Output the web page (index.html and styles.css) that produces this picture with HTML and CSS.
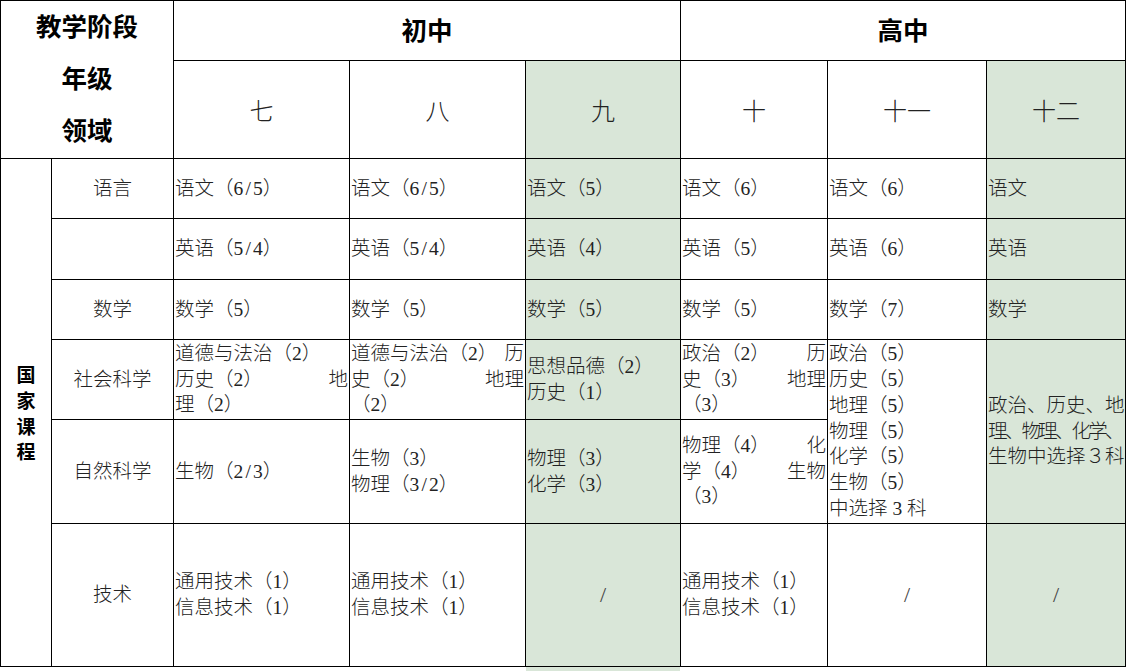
FILE: index.html
```html
<!DOCTYPE html>
<html lang="zh-CN">
<head>
<meta charset="utf-8">
<title>课程设置</title>
<link rel="stylesheet" href="styles.css">
</head>
<body>
<div class="sheet">
  <div class="c ctr hd stage span2c span2r"><div>教学阶段</div><div>年级</div><div>领域</div></div>
  <div class="c ctr hd band span3c">初中</div>
  <div class="c ctr hd band span3c">高中</div>

  <div class="c ctr grade">七</div>
  <div class="c ctr grade">八</div>
  <div class="c ctr grade g">九</div>
  <div class="c ctr grade">十</div>
  <div class="c ctr grade">十一</div>
  <div class="c ctr grade g">十二</div>

  <div class="c ctr nat span6r"><div>国</div><div>家</div><div>课</div><div>程</div></div>
  <div class="c ctr">语言</div>
  <div class="c"><div>语文（6<span class="sl">/</span>5）</div></div>
  <div class="c"><div>语文（6<span class="sl">/</span>5）</div></div>
  <div class="c g">语文（5）</div>
  <div class="c">语文（6）</div>
  <div class="c">语文（6）</div>
  <div class="c g">语文</div>

  <div class="c ctr"></div>
  <div class="c"><div>英语（5<span class="sl">/</span>4）</div></div>
  <div class="c"><div>英语（5<span class="sl">/</span>4）</div></div>
  <div class="c g">英语（4）</div>
  <div class="c">英语（5）</div>
  <div class="c">英语（6）</div>
  <div class="c g">英语</div>

  <div class="c ctr">数学</div>
  <div class="c">数学（5）</div>
  <div class="c">数学（5）</div>
  <div class="c g">数学（5）</div>
  <div class="c">数学（5）</div>
  <div class="c">数学（7）</div>
  <div class="c g">数学</div>

  <div class="c ctr">社会科学</div>
  <div class="c">
    <div>道德与法治（2）</div>
    <div class="j"><span>历史（2）</span><span>地</span></div>
    <div>理（2）</div>
  </div>
  <div class="c">
    <div class="j"><span>道德与法治（2）</span><span>历</span></div>
    <div class="j"><span>史（2）</span><span>地理</span></div>
    <div>（2）</div>
  </div>
  <div class="c g"><div>思想品德（2）</div><div>历史（1）</div></div>
  <div class="c">
    <div class="j"><span>政治（2）</span><span>历</span></div>
    <div class="j"><span>史（3）</span><span>地理</span></div>
    <div>（3）</div>
  </div>
  <div class="c span2r">
    <div>政治（5）</div><div>历史（5）</div><div>地理（5）</div><div>物理（5）</div><div>化学（5）</div><div>生物（5）</div><div>中选择 3 科</div>
  </div>
  <div class="c g span2r">
    <div>政治、历史、地</div><div class="tight">理、物理、化学、</div><div>生物中选择３科</div>
  </div>

  <div class="c ctr">自然科学</div>
  <div class="c"><div>生物（2<span class="sl">/</span>3）</div></div>
  <div class="c"><div>生物（3）</div><div>物理（3<span class="sl">/</span>2）</div></div>
  <div class="c g"><div>物理（3）</div><div>化学（3）</div></div>
  <div class="c">
    <div class="j"><span>物理（4）</span><span>化</span></div>
    <div class="j"><span>学（4）</span><span>生物</span></div>
    <div>（3）</div>
  </div>

  <div class="c ctr">技术</div>
  <div class="c"><div>通用技术（1）</div><div>信息技术（1）</div></div>
  <div class="c"><div>通用技术（1）</div><div>信息技术（1）</div></div>
  <div class="c ctr g slash">/</div>
  <div class="c"><div>通用技术（1）</div><div>信息技术（1）</div></div>
  <div class="c ctr slash">/</div>
  <div class="c ctr g slash">/</div>
</div>
<div class="tail"><div class="tail-green"></div></div>
</body>
</html>
```

FILE: styles.css
```css
html, body {
  margin: 0;
  padding: 0;
  background: #ffffff;
}

body {
  font-family: "Liberation Serif", "Noto Sans CJK SC", serif;
  color: #222222;
}

.sheet {
  display: grid;
  box-sizing: border-box;
  width: 1126px;
  grid-template-columns: 50px 121px 175px 175px 154px 146px 158px 138px;
  grid-template-rows: 59px 97px 59px 60px 59px 79px 103px 142px;
  gap: 1px;
  padding: 1px;
  background: #000000;
}

.c {
  background: #ffffff;
  display: flex;
  flex-direction: column;
  justify-content: center;
  padding: 0 1px;
  font-size: 19.5px;
  font-weight: 300;
  line-height: 25.8px;
  overflow: hidden;
  white-space: nowrap;
}

.g {
  background: #d9e6d8;
}

.ctr {
  align-items: center;
  text-align: center;
}

.j {
  display: flex;
  justify-content: space-between;
}

.sl {
  display: inline-block;
  width: 0.5em;
  text-align: center;
}

.tight {
  letter-spacing: -2.8px;
}

.span2c { grid-column: span 2; }
.span3c { grid-column: span 3; }
.span2r { grid-row: span 2; }
.span6r { grid-row: span 6; }

.hd {
  font-family: "Noto Sans CJK SC", sans-serif;
  font-weight: 700;
  font-size: 25.5px;
  color: #000000;
}

.band {
  padding-bottom: 3px;
}

.stage {
  line-height: 52px;
  padding-bottom: 5px;
}

.grade {
  font-family: "Noto Sans CJK SC", sans-serif;
  font-size: 24px;
  font-weight: 300;
  color: #222222;
}

.nat {
  font-family: "Noto Sans CJK SC", sans-serif;
  font-weight: 700;
  font-size: 19px;
  line-height: 25.6px;
  color: #000000;
}

.slash {
  font-size: 22px;
  color: #444444;
}

.tail {
  display: flex;
  height: 4px;
}

.tail-green {
  margin-left: 526px;
  width: 154px;
  background: #d9e6d8;
}
```
